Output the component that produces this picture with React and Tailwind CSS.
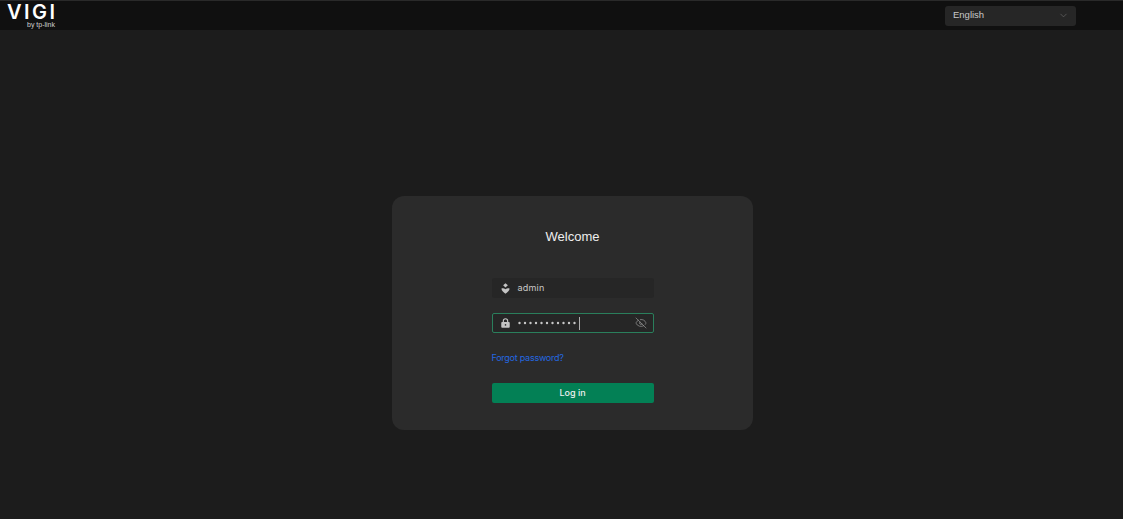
import React from "react";
import { ChevronDown, EyeOff } from "lucide-react";

const UserIcon = () => (
  <svg width="9" height="11" viewBox="0 0 10 13" fill="#c4c4c4">
    <path d="M5 0.2 L7.8 2.8 L5 5.4 L2.2 2.8 Z" />
    <path d="M0.2 6.6 C2 5.8 3.4 6.2 5 7.4 C6.6 6.2 8 5.8 9.8 6.6 C9.8 9 7.6 11.2 5 12.6 C2.4 11.2 0.2 9 0.2 6.6 Z" />
  </svg>
);

const LockIcon = () => (
  <svg width="9" height="10" viewBox="0 0 10 11" fill="none">
    <path d="M2.6 5V3.2a2.4 2.4 0 0 1 4.8 0V5" stroke="#c4c4c4" strokeWidth="1.3" />
    <rect x="0.3" y="4.4" width="9.4" height="6.4" rx="1" fill="#c4c4c4" />
    <circle cx="5" cy="7.6" r="0.9" fill="#2b2b2b" />
  </svg>
);

const PasswordDots = () => (
  <svg width="60" height="4" viewBox="0 0 60 4" fill="#c8c8c8">
    {[...Array(11)].map((_, i) => (
      <circle key={i} cx={1.5 + i * 5.5} cy="2" r="1.2" />
    ))}
  </svg>
);

const App = () => {
  return (
    <div className="h-[519px] w-full overflow-hidden bg-[#1c1c1c] font-['Inter',sans-serif]">
      {/* Top bar */}
      <header className="flex h-[30px] items-center justify-between border-t border-[#2a2a2a] bg-[#101010] pl-[7px] pr-[47px]">
        <div className="mt-px flex w-[48px] flex-col">
          <span className="whitespace-nowrap text-[20px] font-semibold leading-[16px] tracking-[2.5px] text-white">
            VIGI
          </span>
          <span className="mt-px self-end whitespace-nowrap font-['Liberation_Sans',sans-serif] text-[7px] leading-[8px] text-[#d0d0d0]">by tp-link</span>
        </div>
        <div className="flex h-[20px] w-[131px] items-center justify-between rounded-[3px] bg-[#262626] pl-2 pr-[7px] font-['Liberation_Sans',sans-serif] text-[9.5px] text-[#c8c8c8]">
          <span>English</span>
          <ChevronDown size={11} strokeWidth={1.2} className="text-[#777777]" />
        </div>
      </header>

      {/* Login card */}
      <main className="pl-[392px] pt-[166px]">
        <div className="flex h-[234px] w-[361px] flex-col items-center rounded-xl bg-[#2b2b2b] pt-[32px]">
          <h1 className="font-['Liberation_Sans',sans-serif] text-[13px] font-normal leading-[17px] text-[#eeeeee]">Welcome</h1>

          <div className="mt-[33px] flex w-[162px] flex-col">
            <div className="flex h-[20px] items-center rounded-[3px] bg-[#262626] pl-[9px]">
              <UserIcon />
              <span className="ml-[8px] text-[9px] tracking-[0.2px] text-[#c8c8c8]">admin</span>
            </div>

            <div className="mt-[15px] flex h-[20px] items-center rounded-[2px] border border-[#2a7f5c] bg-[#262626] pl-2 pr-[6px]">
              <LockIcon />
              <span className="ml-[8px] flex items-center">
                <PasswordDots />
              </span>
              <span className="ml-[1px] h-[13px] w-px bg-[#b0b0b0]" />
              <EyeOff size={12} strokeWidth={1.2} className="ml-auto text-[#a8a8a8]" />
            </div>

            <a className="mt-[18px] h-[14px] text-[9px] leading-[14px] tracking-[-0.25px] text-[#2468e0]">Forgot password?</a>

            <button className="mt-[18px] h-[20px] rounded-[2px] bg-[#038055] text-[9px] font-medium text-[#f0f0f0]">
              Log in
            </button>
          </div>
        </div>
      </main>
    </div>
  );
};

export default App;
